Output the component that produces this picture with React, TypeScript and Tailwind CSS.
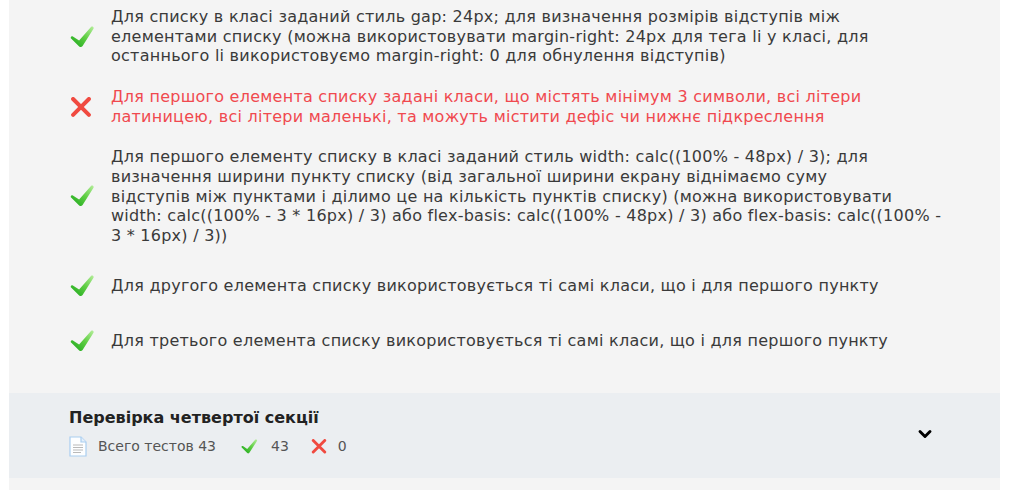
import React from 'react';
import { ChevronDown } from 'lucide-react';

type Check = {
  ok: boolean;
  gap: string;
  lines: string[];
};

const checks: Check[] = [
  {
    ok: true,
    gap: 'mt-0',
    lines: [
      'Для списку в класі заданий стиль gap: 24px; для визначення розмірів відступів між',
      'елементами списку (можна використовувати margin-right: 24px для тега li у класі, для',
      'останнього li використовуємо margin-right: 0 для обнулення відступів)',
    ],
  },
  {
    ok: false,
    gap: 'mt-[21px]',
    lines: [
      'Для першого елемента списку задані класи, що містять мінімум 3 символи, всі літери',
      'латиницею, всі літери маленькі, та можуть містити дефіс чи нижнє підкреслення',
    ],
  },
  {
    ok: true,
    gap: 'mt-[20px]',
    lines: [
      'Для першого елементу списку в класі заданий стиль width: calc((100% - 48px) / 3); для',
      'визначення ширини пункту списку (від загальної ширини екрану віднімаємо суму',
      'відступів між пунктами і ділимо це на кількість пунктів списку) (можна використовувати',
      'width: calc((100% - 3 * 16px) / 3) або flex-basis: calc((100% - 48px) / 3) або flex-basis: calc((100% -',
      '3 * 16px) / 3))',
    ],
  },
  {
    ok: true,
    gap: 'mt-[20px]',
    lines: ['Для другого елемента списку використовується ті самі класи, що і для першого пункту'],
  },
  {
    ok: true,
    gap: 'mt-[15px]',
    lines: ['Для третього елемента списку використовується ті самі класи, що і для першого пункту'],
  },
];

const CheckIcon = ({ w = 25, h = 22, id = 'g' }: { w?: number; h?: number; id?: string }) => (
  <svg width={w} height={h} viewBox="0 0 25 22">
    <defs>
      <linearGradient id={id} x1="1" y1="0" x2="0" y2="1">
        <stop offset="0" stopColor="#b6ee9c" />
        <stop offset="0.45" stopColor="#5fce43" />
        <stop offset="1" stopColor="#18a51a" />
      </linearGradient>
    </defs>
    <path
      d="M21.2 0.8c1.4-0.9 3.1 0.6 2.3 2L12.6 20c-0.8 1.3-2.4 1.5-3.4 0.4L1.1 12.6c-1.1-1.2 0.4-3 1.8-2.2l6.2 4.2L21.2 0.8z"
      fill={`url(#${id})`}
    />
  </svg>
);

const CrossIcon = ({ size = 22 }: { size?: number }) => (
  <svg width={size} height={size * 0.9} viewBox="0 0 22 20">
    <path d="M3 2 L19 18 M19 2 L3 18" stroke="#f04a40" strokeWidth="4" strokeLinecap="round" />
  </svg>
);

const FileIcon = () => (
  <svg width="18" height="21" viewBox="0 0 18 21">
    <path d="M1 1h11l5 5v14H1z" fill="#fdfeff" stroke="#a9cdf0" strokeWidth="1.2" />
    <path d="M12 1v5h5" fill="#e3effb" stroke="#a9cdf0" strokeWidth="1.2" />
    <path d="M4 9h10M4 11.5h10M4 14h10M4 16.5h8" stroke="#b9b9b9" strokeWidth="1" />
  </svg>
);

export default function App() {
  return (
    <div className="min-h-[490px] w-[1035px] bg-white font-['DejaVu_Sans',sans-serif] overflow-hidden">
      <div className="ml-[9px] w-[991px] bg-[#f4f4f4]">
        <div className="flex flex-col pl-[61px] pr-[40px] pt-[7px] pb-[32px]">
          {checks.map((c, i) => (
            <div key={i} className={`flex items-center min-h-[40px] ${c.gap}`}>
              <div className="w-[41px] shrink-0 flex items-center">
                {c.ok ? <CheckIcon id={`g${i}`} /> : <CrossIcon />}
              </div>
              <div
                className={`text-[16px] leading-[19.7px] tracking-[0.25px] ${
                  c.ok ? 'text-[#3a3a3a]' : 'text-[#f0494f]'
                }`}
              >
                {c.lines.map((l, j) => (
                  <span key={j} className="block whitespace-nowrap">
                    {l}
                  </span>
                ))}
              </div>
            </div>
          ))}
        </div>
        <div className="bg-[#ebeef1] h-[85px] flex items-start justify-between pl-[60px] pr-[65px] pt-[15px]">
          <div className="flex flex-col gap-[9px]">
            <div className="text-[16px] leading-[20px] font-bold text-[#222]">Перевірка четвертої секції</div>
            <div className="flex items-center h-[20px] text-[14px] text-[#555]">
              <FileIcon />
              <span className="ml-[11px]">Всего тестов 43</span>
              <span className="ml-[25px] flex items-center">
                <CheckIcon w={17} h={15} id="gs" />
              </span>
              <span className="ml-[13px]">43</span>
              <span className="ml-[22px] flex items-center">
                <CrossIcon size={16} />
              </span>
              <span className="ml-[11px]">0</span>
            </div>
          </div>
          <ChevronDown size={20} strokeWidth={3.5} className="text-black mt-[16px]" />
        </div>
        <div className="h-[20px]" />
      </div>
    </div>
  );
}
